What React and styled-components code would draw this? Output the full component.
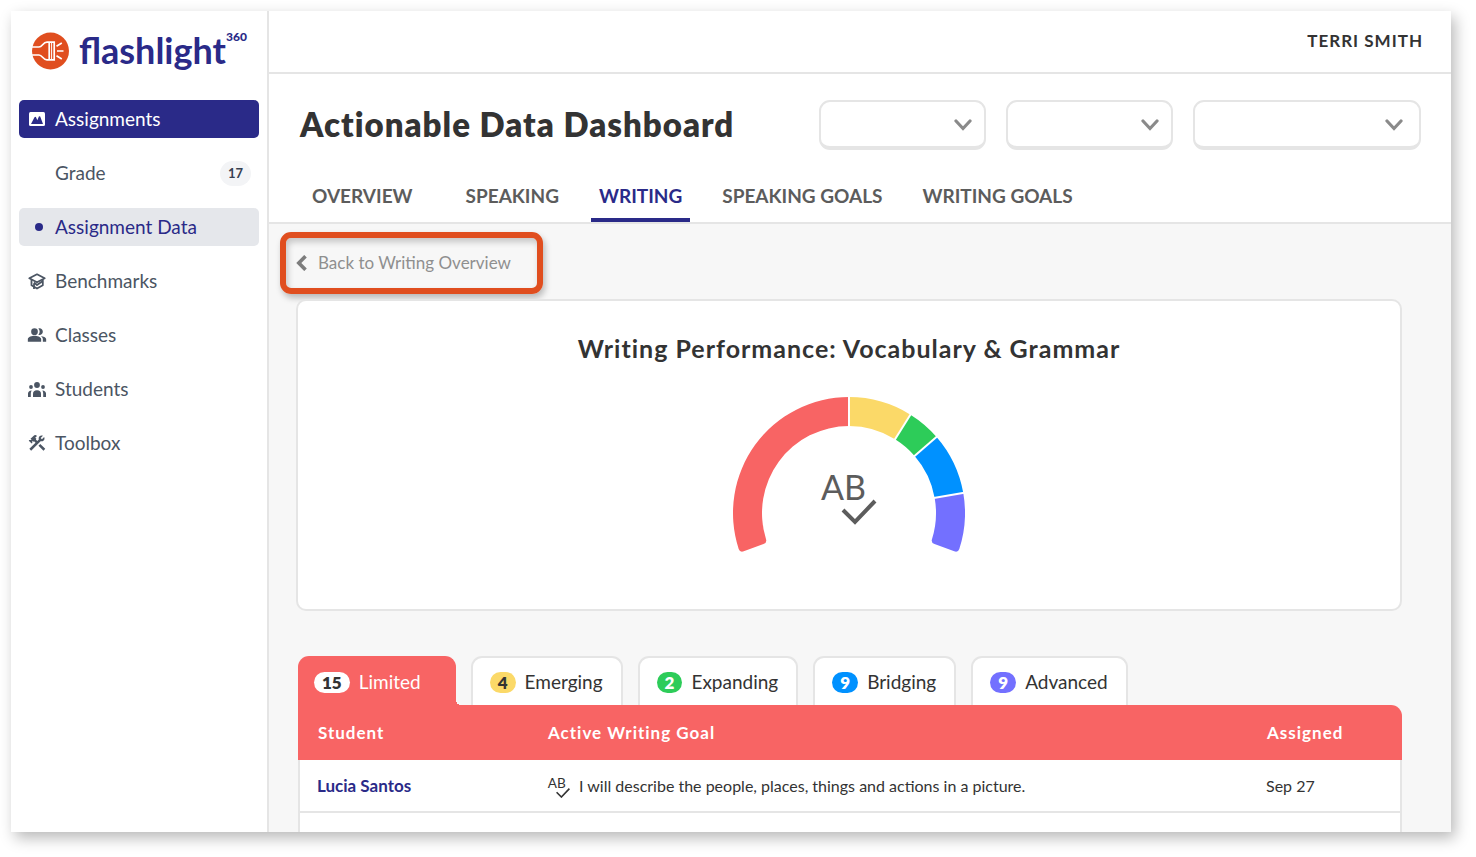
import styled, { createGlobalStyle, css } from "styled-components";
import { MdConstruction, MdPeopleAlt } from "react-icons/md";

const GlobalStyle = createGlobalStyle`
  * {
    box-sizing: border-box;
  }
  body {
    margin: 0;
    background: #ffffff;
    color: #333333;
    font-family: Lato, sans-serif;
  }
  a {
    text-decoration: none;
  }
  button,
  select {
    font-family: inherit;
  }
`;

const Window = styled.div`
  display: flex;
  height: calc(100vh - 36px);
  margin: 11px 25px 25px 11px;
  overflow: hidden;
  background: #ffffff;
  box-shadow: 4px 6px 14px rgba(0, 0, 0, 0.28);
`;

// text next to an icon or a pill, lifted to its optical centre
const Label = styled.span`
  padding-bottom: 2px;
`;

// sidebar
const Sidebar = styled.aside`
  flex: 0 0 258px;
  border-right: 2px solid #e5e5e5;
`;

const Logo = styled.a`
  display: flex;
  align-items: center;
  gap: 9px;
  height: 79px;
  padding-left: 20px;
  color: #2a2a88;
`;

const LogoText = styled.span`
  display: flex;
  align-items: flex-start;
  padding-bottom: 2px;
  font-size: 36px;
  font-weight: 700;
  line-height: 44px;

  > sup {
    font-size: 12px;
    font-weight: 900;
    line-height: 18px;
  }
`;

const Nav = styled.nav`
  display: flex;
  flex-direction: column;
  gap: 16px;
  padding: 10px 8px;
`;

const NavItem = styled.a`
  display: grid;
  grid-template-columns: 20px 1fr auto;
  align-items: center;
  column-gap: 8px;
  height: 38px;
  padding: 0 8px;
  border-radius: 5px;
  font-size: 19px;
  color: #4b5563;

  ${(props) =>
    props.$variant === "active" &&
    css`
      background: #2a2a88;
      color: #ffffff;
    `}
  ${(props) =>
    props.$variant === "selected" &&
    css`
      background: #e5e7eb;
      color: #2a2a88;
    `}
`;

const NavIcon = styled.span`
  display: flex;
  align-items: center;
  justify-content: center;
`;

const Dot = styled.i`
  width: 8px;
  height: 8px;
  margin-left: 4px;
  border-radius: 50%;
  background: #2a2a88;
`;

const NavBadge = styled.span`
  padding: 0 8px;
  border-radius: 13px;
  background: #f3f4f6;
  color: #374151;
  font-size: 13px;
  font-weight: 700;
  line-height: 25px;
`;

// main
const Main = styled.main`
  flex: 1;
  min-width: 0;
  background: #f7f7f7;
`;

const TopBar = styled.div`
  display: flex;
  align-items: center;
  justify-content: flex-end;
  height: 63px;
  padding: 0 28px 2px 0;
  border-bottom: 2px solid #e5e5e5;
  background: #ffffff;
  font-size: 17px;
  font-weight: 700;
  letter-spacing: 1px;
`;

const PageHeader = styled.header`
  border-bottom: 2px solid #e5e5e5;
  background: #ffffff;
`;

const TitleRow = styled.div`
  display: flex;
  align-items: center;
  justify-content: space-between;
  padding: 26px 30px 0 31px;

  > h1 {
    margin: 0;
    padding-bottom: 2px;
    font-size: 33px;
    font-weight: 800;
    line-height: 48px;
    letter-spacing: 1px;
  }
`;

const Filters = styled.div`
  display: flex;
  gap: 20px;
`;

const SelectBox = styled.label`
  display: grid;
  align-items: center;
  width: ${(props) => (props.$wide ? 228 : 167)}px;

  > select,
  > svg {
    grid-area: 1 / 1;
  }
  > select {
    width: 100%;
    height: 50px;
    appearance: none;
    border: 2px solid #e5e5e5;
    border-bottom-width: 4px;
    border-radius: 11px;
    background: #ffffff;
  }
  > svg {
    justify-self: end;
    margin-right: ${(props) => (props.$wide ? 18 : 14)}px;
    pointer-events: none;
  }
`;

const Tabs = styled.nav`
  display: flex;
  gap: 24px;
  padding: 19px 35px 0;
`;

const Tab = styled.a`
  padding: 5px 8px 0;
  border-bottom: 4px solid ${(props) => (props.$active ? "#2a2a88" : "transparent")};
  color: ${(props) => (props.$active ? "#2a2a88" : "#5c5c5c")};
  font-size: 19px;
  font-weight: 700;
  line-height: 44px;
  white-space: nowrap;

  &:first-child {
    margin-right: 13px;
  }
`;

const Content = styled.section`
  padding: 8px 49px 0 27px;
`;

const BackLink = styled.a`
  display: flex;
  align-items: center;
  gap: 10px;
  width: 263px;
  height: 62px;
  margin-left: -16px;
  padding-left: 10px;
  border: 6px solid #e04e1f;
  border-radius: 11px;
  box-shadow: 2px 4px 6px rgba(0, 0, 0, 0.25), inset 2px 4px 6px rgba(0, 0, 0, 0.2);
  color: #8f8f8f;
  font-size: 17px;
`;

const Card = styled.div`
  display: flex;
  flex-direction: column;
  align-items: center;
  height: 312px;
  margin-top: 5px;
  border: 2px solid #e5e5e5;
  border-radius: 10px;
  background: #ffffff;

  > h2 {
    margin: 31px 0 33px;
    font-size: 25px;
    font-weight: 700;
    line-height: 32px;
    letter-spacing: 1px;
  }
`;

const Levels = styled.div`
  display: flex;
  gap: 15px;
  margin: 45px 0 0 2px;
`;

const Level = styled.button`
  position: relative;
  display: flex;
  align-items: center;
  gap: 9px;
  height: 49px;
  padding: 2px 18px 0 17px;
  border: 2px solid #e5e5e5;
  border-bottom: 0;
  border-radius: 11px 11px 0 0;
  background: #ffffff;
  color: #333333;
  font-size: 19px;

  ${(props) =>
    props.$active &&
    css`
      padding-right: 33px;
      padding-left: 14px;
      border-color: #f86464;
      background: #f86464;
      color: #ffffff;

      /* small inner curve where the tab meets the table head */
      &::after {
        content: "";
        position: absolute;
        right: -7px;
        bottom: 0;
        width: 5px;
        height: 5px;
        background: radial-gradient(circle at 100% 0, transparent 5px, #f86464 5px);
      }
    `}
`;

const Count = styled.span`
  padding: 0 8px;
  border-radius: 11px;
  background: ${(props) => props.$bg};
  color: ${(props) => props.$color};
  font-size: 17px;
  font-weight: 800;
  line-height: 21px;
`;

const Table = styled.table`
  width: calc(100% - 2px);
  margin-left: 2px;
  table-layout: fixed;
  border-spacing: 0;
  text-align: left;

  th {
    height: 55px;
    padding: 0 0 0 20px;
    background: #f86464;
    color: #ffffff;
    font-size: 17px;
    font-weight: 700;
    letter-spacing: 1px;
  }
  th:first-child {
    width: 230px;
  }
  th:last-child {
    width: 155px;
    border-top-right-radius: 11px;
  }
  td {
    height: 53px;
    padding: 0 0 0 19px;
    border-bottom: 2px solid #e5e5e5;
    background: #ffffff;
    font-size: 16px;
  }
  td:first-child {
    padding-left: 17px;
    border-left: 2px solid #e5e5e5;
  }
  td:last-child {
    border-right: 2px solid #e5e5e5;
  }
`;

const StudentLink = styled.a`
  color: #2a2a88;
  font-size: 17px;
  font-weight: 700;
`;

const Goal = styled.span`
  display: flex;
  align-items: center;
  gap: 8px;
`;

const LogoMark = () => (
  <svg width="39" height="38" viewBox="0 0 39 38" fill="none">
    <circle cx="19.5" cy="19" r="18.5" fill="#e04e1f" />
    <g stroke="#fff" strokeWidth="1.7">
      <path d="M0 15h8c3.500 0 3.800-4.800 8-4.800h7.200v17.600H16c-4.200 0-4.500-4.800-8-4.800H0" />
      <path d="M18.200 10.200v17.600" />
      <path d="M20.600 10.200v17.600" strokeWidth="1" />
      <path d="M26 19h6.500M25.500 14.200l5.300-3.200M25.500 23.800l5.300 3.200" />
    </g>
  </svg>
);

const PictureIcon = () => (
  <svg width="16" height="14" viewBox="0 0 16 14">
    <rect width="16" height="14" rx="1.5" fill="#fff" />
    <path d="M2 12 5.500 5.200 6.800 4.800 8.300 8.200 10 4.200 11.200 4.500 14 12Z" fill="#2a2a88" />
  </svg>
);

const CapIcon = () => (
  <svg width="18" height="17" viewBox="0 0 18 17" fill="none" stroke="#4b5563" strokeWidth="1.8" strokeLinejoin="round">
    <path d="M1.300 5.300 9 1.300l7.700 4L9 9.300Z" />
    <path d="M3.500 7v5.200L9 15.500l5.800-3.300V6.500" />
    <path d="m6 9.500 3 2.500 5.500-3.700M6 10.500V16" />
  </svg>
);

const StudentsIcon = () => (
  <svg width="18" height="15" viewBox="0 0 18 15" fill="#4b5563">
    <circle cx="9" cy="3" r="2.900" />
    <circle cx="3" cy="5" r="1.900" />
    <circle cx="15" cy="5" r="1.900" />
    <path d="M5 15v-3.200a4 3.600 0 0 1 8 0V15Z" />
    <path d="M0 15v-3.400C0 9.700 1.300 8.400 3.700 8.400 3 9.400 2.800 10.500 2.800 11.800V15Z" />
    <path d="M18 15v-3.400c0-1.900-1.300-3.200-3.700-3.200.7 1 .9 2.100.9 3.400V15Z" />
  </svg>
);

const Chevron = () => (
  <svg width="18" height="12" viewBox="0 0 18 12" fill="none">
    <path d="m2 2 7 7.500L16 2" stroke="#8a8a8a" strokeWidth="3.200" strokeLinecap="round" />
  </svg>
);

const BackIcon = () => (
  <svg width="12" height="16" viewBox="0 0 12 16" fill="none">
    <path d="M9.500 1.200 2.800 8l6.700 6.800" stroke="#7d7d7d" strokeWidth="3.600" />
  </svg>
);

const SpellIcon = ({ width, color }) => (
  <svg width={width} viewBox="-2 -12 60 64">
    <text x="0" y="26" fill={color} fontFamily="Lato, sans-serif" fontSize="34">
      AB
    </text>
    <path d="m22 36 12 12 20-21" fill="none" stroke={color} strokeWidth="4" />
  </svg>
);

// degrees are measured clockwise from the top of the dial
const SEGMENTS = [
  { from: -110, to: 0, color: "#f86464", roundStart: true },
  { from: 0, to: 32, color: "#fbd968" },
  { from: 32, to: 49, color: "#2dcc59" },
  { from: 49, to: 80, color: "#0091ff" },
  { from: 80, to: 110, color: "#7370ff", roundEnd: true },
];
const OUTER = 116;
const INNER = 87;
const CORNER = 4;

const point = (radius, deg) => {
  const rad = (deg * Math.PI) / 180;
  return `${(OUTER + radius * Math.sin(rad)).toFixed(2)} ${(OUTER - radius * Math.cos(rad)).toFixed(2)}`;
};

const segmentPath = ({ from, to, roundStart, roundEnd }) => {
  const start = roundStart ? CORNER : 0;
  const end = roundEnd ? CORNER : 0;
  const turn = (size, radius) => ((size / radius) * 180) / Math.PI;
  return [
    `M${point(INNER + start, from)}`,
    `L${point(OUTER - start, from)}`,
    `Q${point(OUTER, from)} ${point(OUTER, from + turn(start, OUTER))}`,
    `A${OUTER} ${OUTER} 0 0 1 ${point(OUTER, to - turn(end, OUTER))}`,
    `Q${point(OUTER, to)} ${point(OUTER - end, to)}`,
    `L${point(INNER + end, to)}`,
    `Q${point(INNER, to)} ${point(INNER, to - turn(end, INNER))}`,
    `A${INNER} ${INNER} 0 0 0 ${point(INNER, from + turn(start, INNER))}`,
    `Q${point(INNER, from)} ${point(INNER + start, from)}Z`,
  ].join("");
};

const GaugeBox = styled.div`
  display: grid;
  justify-items: center;

  > svg {
    grid-area: 1 / 1;
  }
  > svg:last-child {
    margin-top: 65px;
  }
`;

const Gauge = () => (
  <GaugeBox>
    <svg width="232" height="158" viewBox="0 0 232 158">
      {SEGMENTS.map((segment) => (
        <path key={segment.color} d={segmentPath(segment)} fill={segment.color} />
      ))}
      {SEGMENTS.slice(1).map(({ from }) => (
        <path key={from} d={`M${point(INNER - 1, from)}L${point(OUTER + 1, from)}`} stroke="#fff" strokeWidth="2" />
      ))}
    </svg>
    <SpellIcon width={60} color="#5c5c5c" />
  </GaugeBox>
);

const NAV = [
  { label: "Assignments", icon: <PictureIcon />, variant: "active" },
  { label: "Grade", count: 17 },
  { label: "Assignment Data", icon: <Dot />, variant: "selected" },
  { label: "Benchmarks", icon: <CapIcon /> },
  { label: "Classes", icon: <MdPeopleAlt size={20} /> },
  { label: "Students", icon: <StudentsIcon /> },
  { label: "Toolbox", icon: <MdConstruction size={20} /> },
];

const TABS = ["OVERVIEW", "SPEAKING", "WRITING", "SPEAKING GOALS", "WRITING GOALS"];

const LEVELS = [
  { label: "Limited", count: 15, bg: "#ffffff", color: "#333333" },
  { label: "Emerging", count: 4, bg: "#fbd968", color: "#333333" },
  { label: "Expanding", count: 2, bg: "#2dcc59", color: "#ffffff" },
  { label: "Bridging", count: 9, bg: "#0091ff", color: "#ffffff" },
  { label: "Advanced", count: 9, bg: "#7370ff", color: "#ffffff" },
];

function App() {
  return (
    <>
      <GlobalStyle />
      <Window>
        <Sidebar>
          <Logo href="#">
            <LogoMark />
            <LogoText>
              flashlight<sup>360</sup>
            </LogoText>
          </Logo>
          <Nav>
            {NAV.map((item) => (
              <NavItem key={item.label} href="#" $variant={item.variant}>
                <NavIcon>{item.icon}</NavIcon>
                <Label>{item.label}</Label>
                {item.count ? <NavBadge>{item.count}</NavBadge> : null}
              </NavItem>
            ))}
          </Nav>
        </Sidebar>
        <Main>
          <TopBar>TERRI SMITH</TopBar>
          <PageHeader>
            <TitleRow>
              <h1>Actionable Data Dashboard</h1>
              <Filters>
                {["School", "Class", "Assignment"].map((name, i) => (
                  <SelectBox key={name} $wide={i === 2}>
                    <select aria-label={name} />
                    <Chevron />
                  </SelectBox>
                ))}
              </Filters>
            </TitleRow>
            <Tabs>
              {TABS.map((tab) => (
                <Tab key={tab} href="#" $active={tab === "WRITING"}>
                  {tab}
                </Tab>
              ))}
            </Tabs>
          </PageHeader>
          <Content>
            <BackLink href="#">
              <BackIcon />
              <Label>Back to Writing Overview</Label>
            </BackLink>
            <Card>
              <h2>Writing Performance: Vocabulary &amp; Grammar</h2>
              <Gauge />
            </Card>
            <Levels>
              {LEVELS.map((level, i) => (
                <Level key={level.label} type="button" $active={i === 0}>
                  <Count $bg={level.bg} $color={level.color}>
                    {level.count}
                  </Count>
                  <Label>{level.label}</Label>
                </Level>
              ))}
            </Levels>
            <Table>
              <thead>
                <tr>
                  <th>Student</th>
                  <th>Active Writing Goal</th>
                  <th>Assigned</th>
                </tr>
              </thead>
              <tbody>
                <tr>
                  <td>
                    <StudentLink href="#">Lucia Santos</StudentLink>
                  </td>
                  <td>
                    <Goal>
                      <SpellIcon width={24} color="#333333" />
                      I will describe the people, places, things and actions in a picture.
                    </Goal>
                  </td>
                  <td>Sep 27</td>
                </tr>
                <tr>
                  <td />
                  <td />
                  <td />
                </tr>
              </tbody>
            </Table>
          </Content>
        </Main>
      </Window>
    </>
  );
}

export default App;
